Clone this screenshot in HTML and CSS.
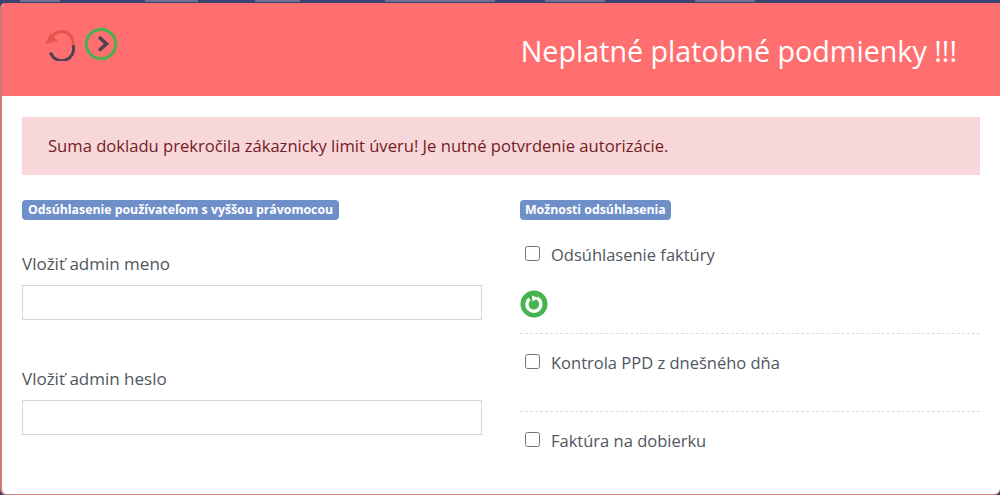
FILE: index.html
```html
<!DOCTYPE html>
<html lang="sk">
<head>
    <meta charset="UTF-8">
    <meta name="viewport" content="width=device-width, initial-scale=1.0">
    <title>Neplatné platobné podmienky</title>
    <link rel="stylesheet" href="styles.css">
</head>
<body>
    <!-- rest of the nav that sticks out above the dialog, unreadable so just bars -->
    <div class="navstrip">
        <span class="navitem first"></span>
        <span class="navitem second"></span>
        <span class="navitem third"></span>
        <span class="navitem fourth"></span>
        <span class="navitem fifth"></span>
        <span class="navitem sixth"></span>
    </div>

    <div class="modal">
        <div class="modal-header">
            <div class="header-icons">
                <svg width="34" height="34" viewBox="0 0 34 34" fill="none">
                    <path d="M6.500 25.500A11.500 11.500 0 0 0 29 18" stroke="#4a4453" stroke-width="3"/>
                    <path d="M29 18A11.500 11.500 0 0 0 9 8.500" stroke="#e2574c" stroke-width="3"/>
                    <path d="M1 17 L6.500 6 L14 14 Z" fill="#e2574c"/>
                </svg>
                <svg width="34" height="34" viewBox="0 0 34 34" fill="none">
                    <circle cx="17" cy="17" r="14.700" stroke="#4fae50" stroke-width="3.200"/>
                    <path d="M15 10 L22.500 16.800 L15 23.500" stroke="#4a4453" stroke-width="3.600"/>
                </svg>
            </div>
            <h2 class="modal-title">Neplatné platobné podmienky !!!</h2>
        </div>

        <div class="modal-body">
            <div class="alert">Suma dokladu prekročila zákaznicky limit úveru! Je nutné potvrdenie autorizácie.</div>

            <div class="columns">
                <div class="col-left">
                    <span class="badge">Odsúhlasenie používateľom s vyššou právomocou</span>
                    <div class="field first-field">
                        <label for="meno">Vložiť admin meno</label>
                        <input type="text" id="meno">
                    </div>
                    <div class="field">
                        <label for="heslo">Vložiť admin heslo</label>
                        <input type="password" id="heslo">
                    </div>
                </div>

                <div class="col-right">
                    <span class="badge">Možnosti odsúhlasenia</span>
                    <div class="option option-first">
                        <label class="check"><input type="checkbox"> Odsúhlasenie faktúry</label>
                        <svg class="icon-refresh" width="28" height="28" viewBox="0 0 28 28" fill="none">
                            <circle cx="14" cy="14" r="13.500" fill="#45b34f"/>
                            <path d="M17 8A7 7 0 1 1 9.500 8.800" stroke="#fff" stroke-width="3.400"/>
                            <path d="M12 5.500 L18 8 L12.500 11.500 Z" fill="#fff"/>
                        </svg>
                    </div>
                    <div class="option option-middle">
                        <label class="check"><input type="checkbox"> Kontrola PPD z dnešného dňa</label>
                    </div>
                    <div class="option option-last">
                        <label class="check"><input type="checkbox"> Faktúra na dobierku</label>
                    </div>
                </div>
            </div>
        </div>
    </div>
</body>
</html>
```

FILE: styles.css
```css
* {
    box-sizing: border-box;
}
html, body {
    height: 495px;
    overflow: hidden;
}
body {
    margin: 0;
    background: #3b4371;
    font-family: "Open Sans", "Noto Sans", sans-serif;
    color: #50565c;
}

.navstrip {
    height: 3px;
    display: flex;
}
.navitem {
    display: block;
    height: 2px;
    background: #6f7390;
}
.navitem.first { margin-left: 20px; width: 40px; }
.navitem.second { margin-left: 85px; width: 53px; }
.navitem.third { margin-left: 57px; width: 45px; }
.navitem.fourth { margin-left: 85px; width: 110px; }
.navitem.fifth { margin-left: 50px; width: 60px; }
.navitem.sixth { margin-left: 90px; width: 60px; }

.modal {
    height: 492px;
    background: #fff;
    border-left: 2px solid #c97a7a;
    border-bottom: 1px solid #d98080;
    border-radius: 5px 0 6px 6px;
    overflow: hidden;
}
.modal-header {
    height: 93px;
    background: #ff6f6f;
    display: flex;
    justify-content: space-between;
    align-items: flex-start;
    padding: 24px 43px 0 42px;
    color: #fff;
}
.header-icons {
    display: flex;
    gap: 6px;
}
.modal-title {
    margin: 4px 0 0;
    font-size: 28.700px;
    font-weight: 400;
    line-height: 40px;
}

.modal-body {
    padding: 21px 20px 0 20px;
}
.alert {
    height: 58px;
    background: #f8d7da;
    color: #721c24;
    font-size: 16.600px;
    line-height: 58px;
    padding-left: 26px;
}

.columns {
    display: flex;
    margin-top: 25px;
}
.col-left {
    width: 460px;
    margin-right: 38px;
}
.col-right {
    flex: 1;
}

.badge {
    display: block;
    width: fit-content;
    background: #6f8fc9;
    color: #fff;
    font-size: 12.300px;
    font-weight: 700;
    line-height: 20px;
    height: 20px;
    padding: 0 6px;
    border-radius: 4px;
}
.col-right .badge {
    padding: 0 5px;
}

.field {
    margin-top: 47px;
}
.field.first-field {
    margin-top: 32px;
}
.field label {
    display: block;
    font-size: 17px;
    line-height: 24px;
    margin-bottom: 9px;
}
.field input {
    display: block;
    width: 100%;
    height: 35px;
    border: 1px solid #d6d6d6;
    background: #fff;
}

.option {
    border-bottom: 1px dashed #dcdcdc;
}
.option-first {
    height: 114px;
    padding-top: 23px;
}
.option-middle {
    height: 78px;
    padding-top: 17px;
}
.option-last {
    border-bottom: none;
    padding-top: 17px;
}
.check {
    display: flex;
    align-items: center;
    font-size: 16.500px;
    line-height: 24px;
    gap: 11px;
    padding-left: 5px;
}
.check input {
    width: 15px;
    height: 15px;
    margin: -3px 0 0;
}
.icon-refresh {
    display: block;
    margin-top: 23px;
}
```
